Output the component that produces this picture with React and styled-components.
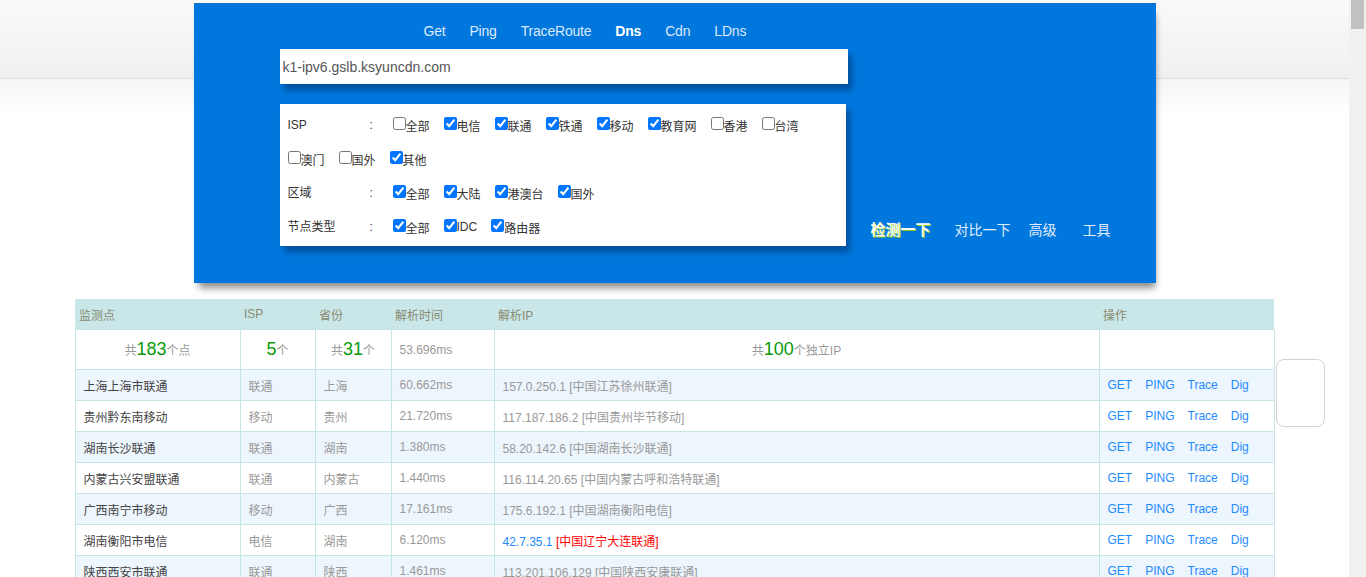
import React from 'react';
import styled, { createGlobalStyle } from 'styled-components';

const GlobalStyle = createGlobalStyle`
  body {
    margin: 0;
    font-family: "Liberation Sans", "Noto Sans CJK SC", sans-serif;
    font-size: 12px;
    color: #333;
    background: linear-gradient(
      #fafafa 0px,
      #f0f0f0 78px,
      #dedede 78px,
      #dedede 79px,
      #f5f5f5 79px,
      #ffffff 112px
    ) no-repeat;
    background-color: #fff;
  }
`;

const navItems = ['Get', 'Ping', 'TraceRoute', 'Dns', 'Cdn', 'LDns'];

const optionGroups = [
  {
    label: 'ISP',
    items: [
      ['全部', false], ['电信', true], ['联通', true], ['铁通', true], ['移动', true],
      ['教育网', true], ['香港', false], ['台湾', false], ['澳门', false], ['国外', false],
      ['其他', true],
    ],
  },
  {
    label: '区域',
    items: [['全部', true], ['大陆', true], ['港澳台', true], ['国外', true]],
  },
  {
    label: '节点类型',
    items: [['全部', true], ['IDC', true], ['路由器', true]],
  },
];

const rows = [
  ['上海上海市联通', '联通', '上海', '60.662ms', '157.0.250.1', '[中国江苏徐州联通]'],
  ['贵州黔东南移动', '移动', '贵州', '21.720ms', '117.187.186.2', '[中国贵州毕节移动]'],
  ['湖南长沙联通', '联通', '湖南', '1.380ms', '58.20.142.6', '[中国湖南长沙联通]'],
  ['内蒙古兴安盟联通', '联通', '内蒙古', '1.440ms', '116.114.20.65', '[中国内蒙古呼和浩特联通]'],
  ['广西南宁市移动', '移动', '广西', '17.161ms', '175.6.192.1', '[中国湖南衡阳电信]'],
  ['湖南衡阳市电信', '电信', '湖南', '6.120ms', '42.7.35.1', '[中国辽宁大连联通]', true],
  ['陕西西安市联通', '联通', '陕西', '1.461ms', '113.201.106.129', '[中国陕西安康联通]'],
];

function App() {
  return (
    <>
      <GlobalStyle />
      <Page>
        <SearchPanel>
          <NavBar>
            {navItems.map((n) => (
              <NavItem key={n} $active={n === 'Dns'}>{n}</NavItem>
            ))}
          </NavBar>
          <FormRow>
            <FormMain>
              <HostInput type="text" defaultValue="k1-ipv6.gslb.ksyuncdn.com" />
              <OptionBox>
                {optionGroups.map((g) => (
                  <OptionGroup key={g.label}>
                    <GroupLabel>{g.label}</GroupLabel>
                    <Colon>:</Colon>
                    {g.items.map(([name, on]) => (
                      <CheckItem key={name}>
                        <input type="checkbox" defaultChecked={on} />
                        {name}
                      </CheckItem>
                    ))}
                  </OptionGroup>
                ))}
              </OptionBox>
            </FormMain>
            <Actions>
              <ActionButton $primary>检测一下</ActionButton>
              <ActionButton $gap={24}>对比一下</ActionButton>
              <ActionButton $gap={18}>高级</ActionButton>
              <ActionButton $gap={26}>工具</ActionButton>
            </Actions>
          </FormRow>
        </SearchPanel>

        <ResultTable>
          <colgroup>
            <col style={{ width: 165 }} />
            <col style={{ width: 75 }} />
            <col style={{ width: 76 }} />
            <col style={{ width: 103 }} />
            <col style={{ width: 605 }} />
            <col style={{ width: 175 }} />
          </colgroup>
          <thead>
            <tr>
              <Th>监测点</Th>
              <Th>ISP</Th>
              <Th>省份</Th>
              <Th>解析时间</Th>
              <Th>解析IP</Th>
              <Th>操作</Th>
            </tr>
          </thead>
          <tbody>
            <SummaryRow>
              <Td $center>共<Count>183</Count>个点</Td>
              <Td $center><Count>5</Count>个</Td>
              <Td $center>共<Count>31</Count>个</Td>
              <Td>53.696ms</Td>
              <Td $center>共<Count>100</Count>个独立IP</Td>
              <Td />
            </SummaryRow>
            {rows.map(([site, isp, prov, time, ip, loc, hl], i) => (
              <DataRow key={site} $odd={i % 2 === 0}>
                <Td $dark>{site}</Td>
                <Td>{isp}</Td>
                <Td>{prov}</Td>
                <Td>{time}</Td>
                <Td>
                  {hl ? (
                    <>
                      <IpLink>{ip}</IpLink> <Mismatch>{loc}</Mismatch>
                    </>
                  ) : (
                    `${ip} ${loc}`
                  )}
                </Td>
                <Td>
                  <OpLink>GET</OpLink>
                  <OpLink>PING</OpLink>
                  <OpLink>Trace</OpLink>
                  <OpLink>Dig</OpLink>
                </Td>
              </DataRow>
            ))}
          </tbody>
        </ResultTable>
        <FloatBox />
      </Page>
      <ScrollTrack>
        <ScrollThumb />
      </ScrollTrack>
    </>
  );
}

export default App;

const Page = styled.div`
  width: 1349px;
  padding-top: 3px;
  padding-bottom: 40px;
`;

const SearchPanel = styled.div`
  width: 962px;
  height: 280px;
  box-sizing: border-box;
  margin: 0 auto;
  padding-top: 17px;
  background: #0077dd;
  border-top: 1px solid #1170c8;
  box-shadow: 2px 8px 7px -3px rgba(0, 0, 0, 0.45);
`;

const NavBar = styled.div`
  display: flex;
  gap: 24px;
  padding-left: 230px;
  height: 20px;
  align-items: center;
`;

const NavItem = styled.span`
  font-size: 14px;
  line-height: 20px;
  letter-spacing: -0.2px;
  color: ${(p) => (p.$active ? '#ffffff' : '#dbe9fb')};
  font-weight: ${(p) => (p.$active ? 'bold' : 'normal')};
  cursor: pointer;
`;

const FormRow = styled.div`
  display: flex;
  align-items: flex-end;
  margin-top: 8px;
`;

const FormMain = styled.div`
  margin-left: 86px;
  width: 568px;
`;

const HostInput = styled.input`
  display: block;
  width: 568px;
  height: 35px;
  box-sizing: border-box;
  border: none;
  outline: none;
  padding: 0 3px;
  font-family: "Liberation Sans", "Noto Sans CJK SC", sans-serif;
  font-size: 14px;
  color: #555;
  background: #fff;
  box-shadow: 4px 6px 6px rgba(0, 30, 80, 0.45);
`;

const OptionBox = styled.div`
  width: 566px;
  height: 142px;
  box-sizing: border-box;
  margin-top: 20px;
  padding: 4px 8px 2px 8px;
  background: #fff;
  box-shadow: 4px 6px 6px rgba(0, 30, 80, 0.45);
`;

const OptionGroup = styled.div`
  display: flex;
  flex-wrap: wrap;
  align-items: center;
`;

const GroupLabel = styled.span`
  width: 82px;
  line-height: 34px;
  color: #333;
`;

const Colon = styled.span`
  width: 23px;
  line-height: 34px;
  color: #5a2a5a;
`;

const CheckItem = styled.label`
  display: flex;
  align-items: center;
  height: 34px;
  margin-right: 14px;
  color: #333;

  input {
    width: 13px;
    height: 13px;
    margin: 0 0 3px 0;
  }
`;

const Actions = styled.div`
  display: flex;
  margin-left: 23px;
  margin-bottom: 6px;
`;

const ActionButton = styled.span`
  margin-left: ${(p) => p.$gap || 0}px;
  font-size: ${(p) => (p.$primary ? '15px' : '14px')};
  font-weight: ${(p) => (p.$primary ? 'bold' : 'normal')};
  line-height: 20px;
  color: ${(p) => (p.$primary ? '#ffffff' : '#e3eefc')};
  text-shadow: ${(p) => (p.$primary ? '1px 1px 0 #8fcc10' : 'none')};
  cursor: pointer;
`;

const ResultTable = styled.table`
  width: 1199px;
  margin: 16px auto 0;
  border-collapse: collapse;
  table-layout: fixed;
`;

const Th = styled.th`
  height: 30px;
  padding: 0 4px;
  text-align: left;
  font-weight: normal;
  font-size: 12px;
  color: #8a8a70;
  background: #c9e7e8;
`;

const Td = styled.td`
  height: 30px;
  padding: 0 8px;
  border: 1px solid #c7e5e5;
  text-align: ${(p) => (p.$center ? 'center' : 'left')};
  color: ${(p) => (p.$dark ? '#444' : '#999')};
  font-size: 12px;
  white-space: nowrap;
`;

const SummaryRow = styled.tr`
  background: #fff;

  td {
    height: 39px;
  }
`;

const DataRow = styled.tr`
  background: ${(p) => (p.$odd ? '#edf5fd' : '#ffffff')};
`;

const Count = styled.span`
  font-size: 18px;
  color: #0a9a0a;
`;

const IpLink = styled.span`
  color: #1e8bff;
`;

const Mismatch = styled.span`
  color: #ff0000;
`;

const OpLink = styled.a`
  margin-right: 13px;
  color: #1e8bff;
  cursor: pointer;
`;

const FloatBox = styled.div`
  position: fixed;
  top: 359px;
  left: 1276px;
  width: 49px;
  height: 68px;
  box-sizing: border-box;
  background: #fff;
  border: 1px solid #d2d2d2;
  border-radius: 8px;
`;

const ScrollTrack = styled.div`
  position: fixed;
  top: 0;
  right: 0;
  width: 17px;
  height: 100vh;
  background: #f1f1f1;
`;

const ScrollThumb = styled.div`
  width: 13px;
  height: 29px;
  margin-left: 2px;
  background: #c1c1c1;
`;
